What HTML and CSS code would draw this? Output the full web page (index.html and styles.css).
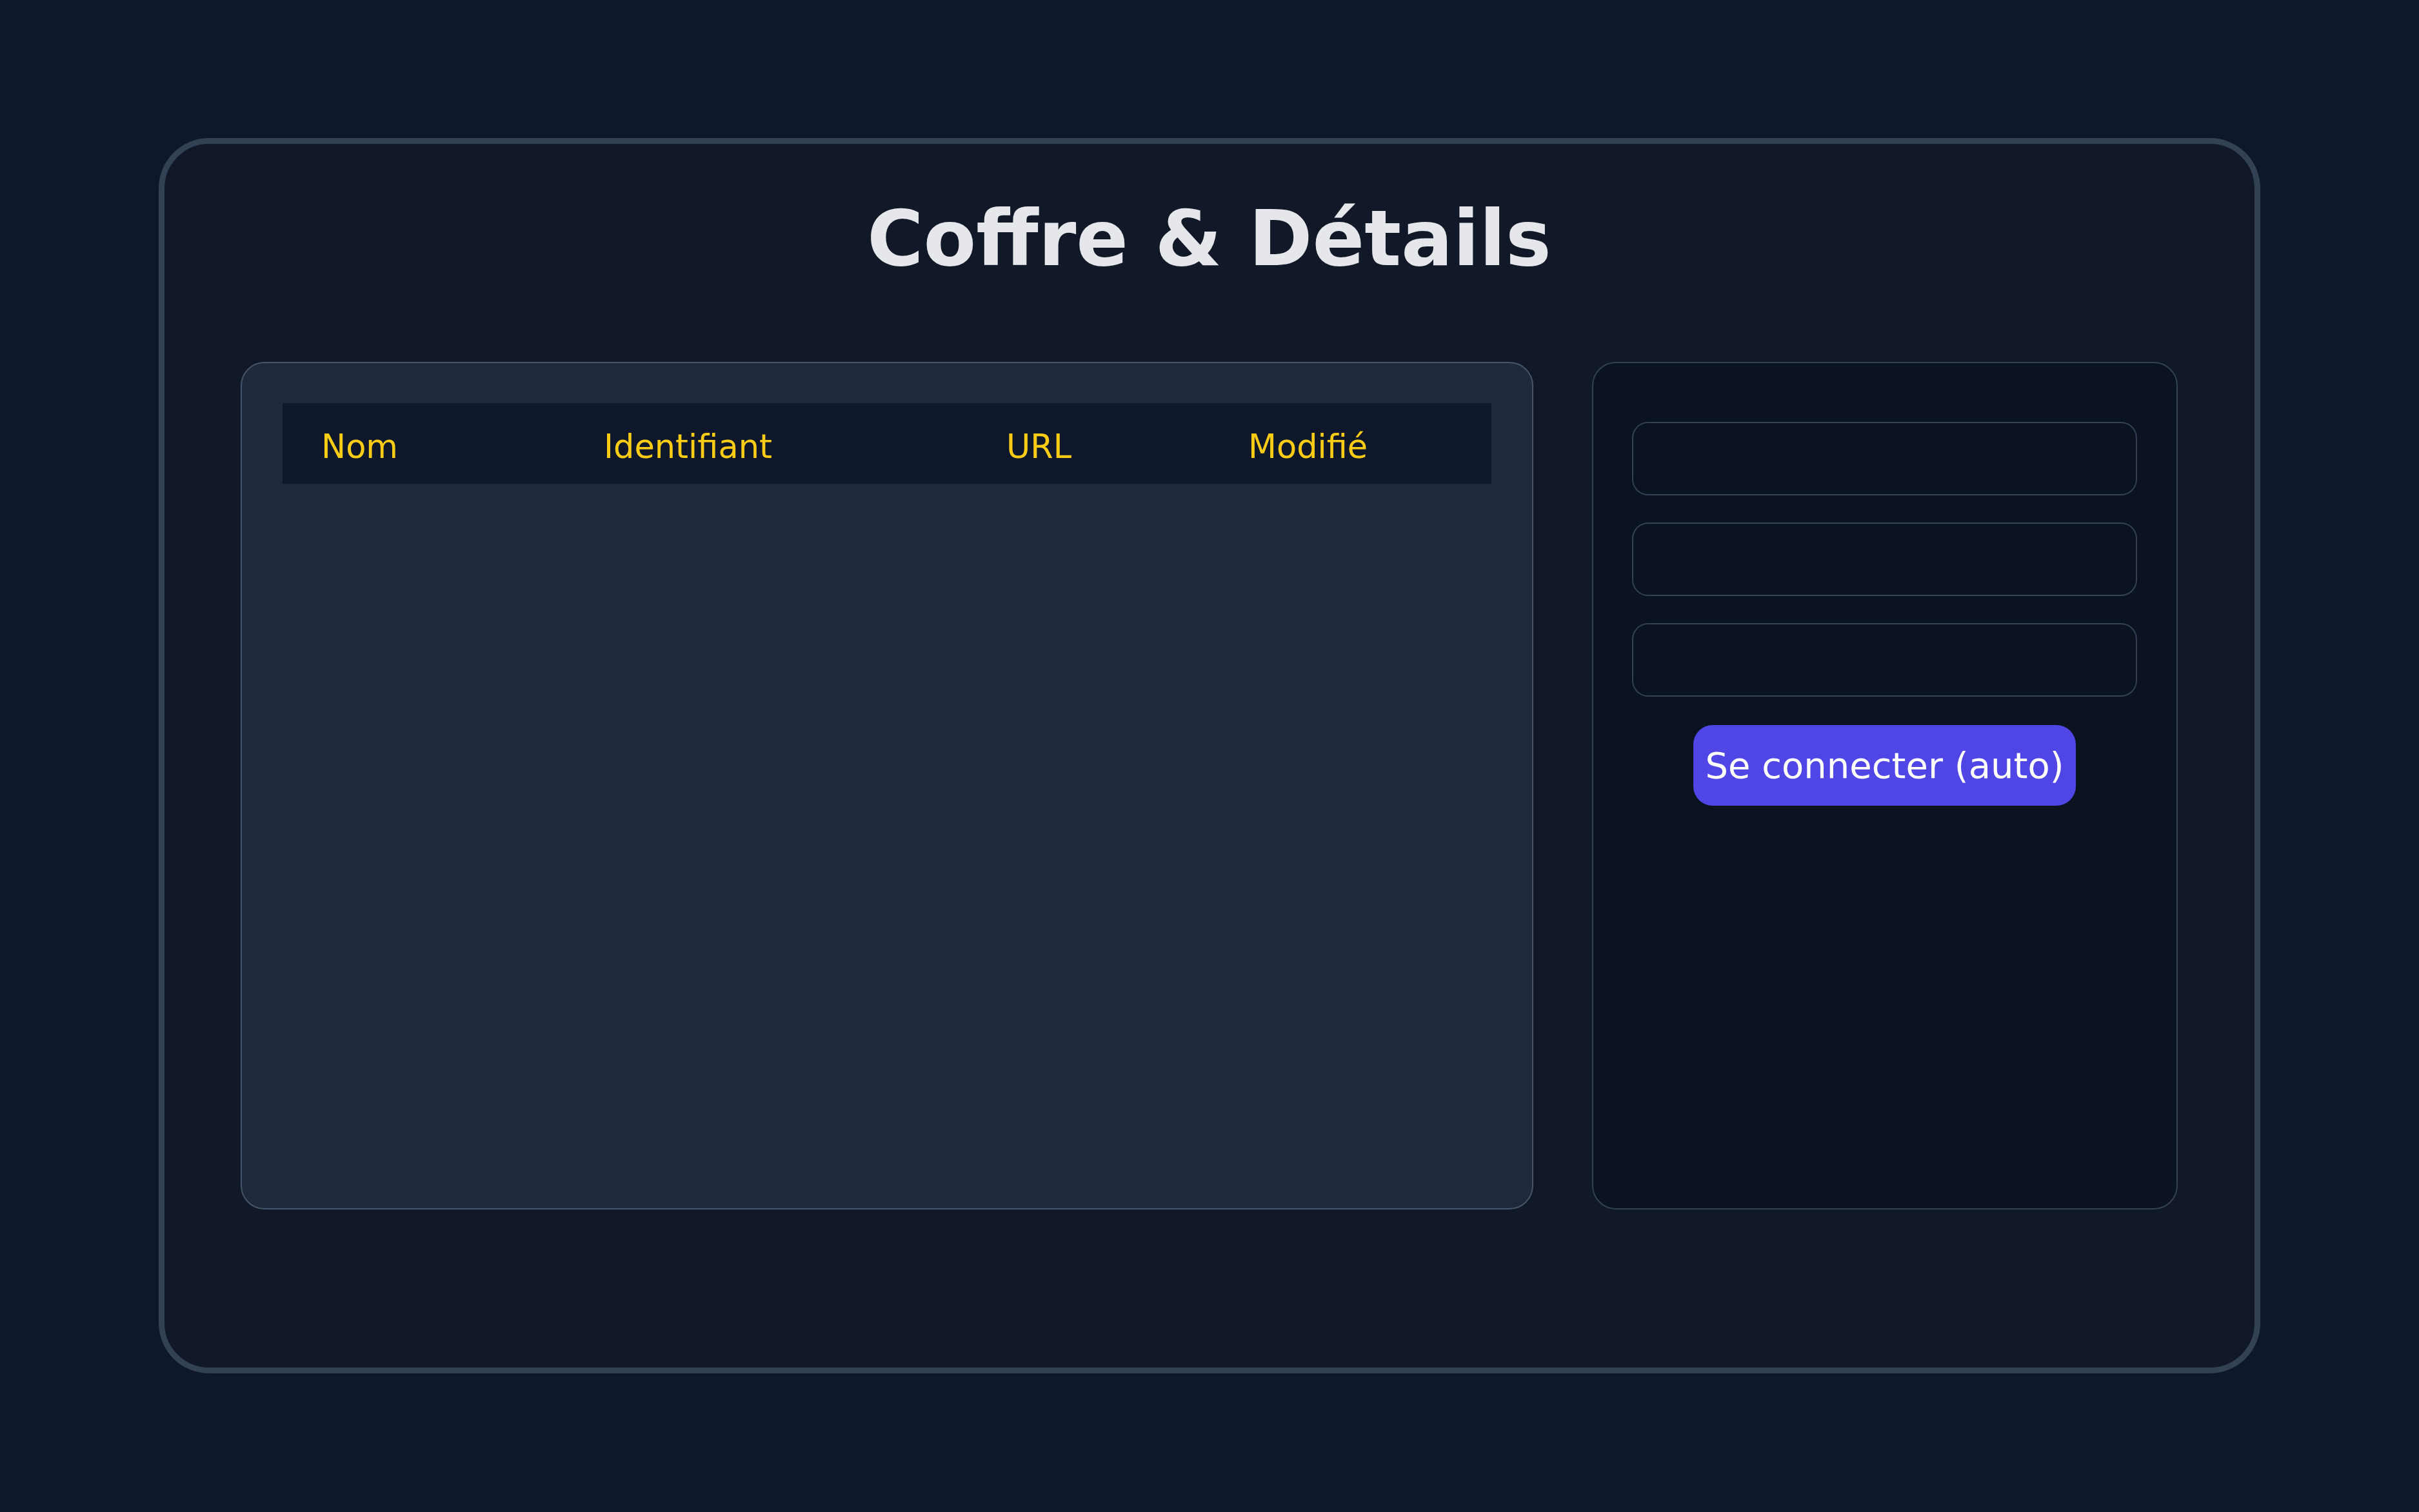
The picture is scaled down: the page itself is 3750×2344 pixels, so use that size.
FILE: index.html
```html
<!DOCTYPE html>
<html lang="fr">
<head>
<meta charset="utf-8">
<title>Coffre &amp; Détails</title>
<link rel="stylesheet" href="styles.css">
</head>
<body>
<div class="page">
  <main class="card">
    <h1 class="title">Coffre &amp; Détails</h1>
    <div class="panels">
      <section class="vault">
        <div class="thead">
          <span class="th">Nom</span>
          <span class="th">Identifiant</span>
          <span class="th">URL</span>
          <span class="th">Modifié</span>
        </div>
      </section>
      <aside class="details">
        <div class="field"></div>
        <div class="field"></div>
        <div class="field"></div>
        <button class="btn" type="button">Se connecter (auto)</button>
      </aside>
    </div>
  </main>
</div>
</body>
</html>
```
FILE: styles.css
```css
html, body {
  margin: 0;
  padding: 0;
  background: #0f172a;
  font-family: "DejaVu Sans", "Liberation Sans", sans-serif;
}

.page {
  padding: 214px 0 0 246px;
  width: 3750px;
  height: 2344px;
  box-sizing: border-box;
}

.card {
  width: 3258px;
  height: 1915px;
  box-sizing: border-box;
  background: #111827;
  border: 9px solid #334155;
  border-radius: 78px;
  padding: 79px 119px 0 118px;
  display: flex;
  flex-direction: column;
}

.title {
  margin: 0;
  text-align: center;
  color: #e5e7eb;
  font-size: 119px;
  line-height: 136px;
  font-weight: 700;
}

.panels {
  margin-top: 123px;
  display: flex;
  gap: 91px;
  height: 1314px;
}

.vault {
  flex: 1;
  box-sizing: border-box;
  background: #1e293b;
  border: 2px solid #475569;
  border-radius: 37px;
  padding: 62px 63px;
}

.thead {
  height: 125px;
  box-sizing: border-box;
  padding: 10px 0 0 60px;
  background: #0f172a;
  display: grid;
  grid-template-columns: 438px 624px 375px 1fr;
  align-items: center;
}

.th {
  color: #facc15;
  font-size: 51px;
  line-height: 60px;
  white-space: nowrap;
}

.details {
  width: 908px;
  box-sizing: border-box;
  background: #0b1220;
  border: 2px solid #334155;
  border-radius: 37px;
  padding: 91px 61px 0 60px;
  display: flex;
  flex-direction: column;
  align-items: stretch;
  gap: 42px;
}

.field {
  height: 114px;
  box-sizing: border-box;
  border: 2px solid #334155;
  border-radius: 25px;
  background: #0b1220;
}

.btn {
  align-self: center;
  margin-top: 2px;
  width: 593px;
  height: 125px;
  border: none;
  border-radius: 30px;
  background: #4f46e5;
  color: #ffffff;
  font-family: "DejaVu Sans", "Liberation Sans", sans-serif;
  font-size: 56px;
  padding: 0;
  white-space: nowrap;
  cursor: pointer;
}
```
